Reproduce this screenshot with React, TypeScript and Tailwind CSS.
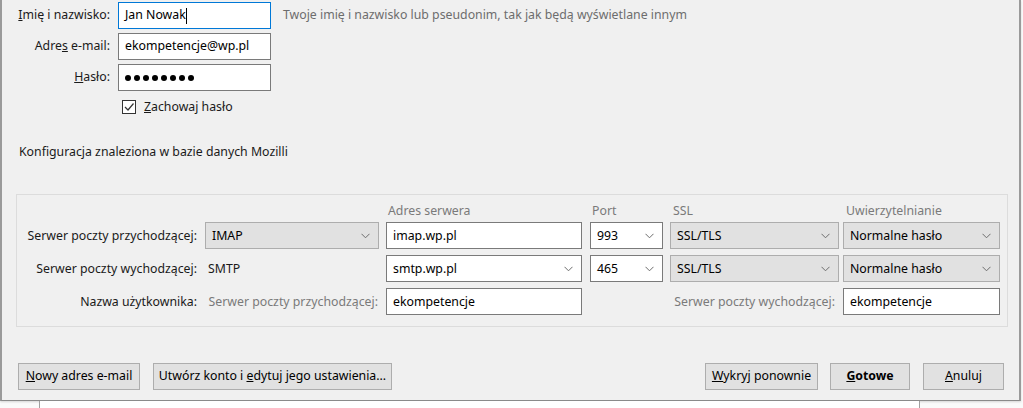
import React from "react";

const font = { fontFamily: '"Segoe UI", "Noto Sans", "DejaVu Sans", sans-serif' };

const Chevron: React.FC<{ className?: string }> = ({ className }) => (
  <svg width="9" height="6" viewBox="0 0 9 6" className={className}>
    <path d="M0.5 0.8 L4.5 4.8 L8.5 0.8" fill="none" stroke="#6d6d6d" strokeWidth="1" />
  </svg>
);

const TextBox: React.FC<{ value: React.ReactNode; w: string; focused?: boolean; chevron?: boolean }> = ({
  value,
  w,
  focused,
  chevron,
}) => (
  <div
    className={`${w} h-[27px] bg-white border ${focused ? "border-[#0078d7]" : "border-[#7a7a7a]"} flex items-center pl-[6px] pr-[8px] text-[12.3px] text-black whitespace-nowrap`}
  >
    <span className="flex-1 flex items-center">{value}</span>
    {chevron && <Chevron />}
  </div>
);

const Select: React.FC<{ value: string; w: string; white?: boolean }> = ({ value, w, white }) => (
  <div
    className={`${w} h-[27px] border ${white ? "bg-white border-[#7a7a7a]" : "bg-[#e1e1e1] border-[#adadad]"} flex items-center pl-[6px] pr-[8px] text-[12.3px] text-black whitespace-nowrap`}
  >
    <span className="flex-1">{value}</span>
    <Chevron />
  </div>
);

const Button: React.FC<{ children: React.ReactNode; w: string; bold?: boolean }> = ({ children, w, bold }) => (
  <div
    className={`${w} h-[27px] bg-[#e1e1e1] border border-[#adadad] flex items-center justify-center text-[12.3px] text-black whitespace-nowrap ${bold ? "font-bold" : ""}`}
  >
    {children}
  </div>
);

const Dots = () => (
  <span className="flex gap-[3px]">
    {[0, 1, 2, 3, 4, 5, 6, 7].map((i) => (
      <span key={i} className="w-[6px] h-[6px] rounded-full bg-black" />
    ))}
  </span>
);

export default function App() {
  return (
    <div className="w-[1023px] h-[408px] bg-[#fafafa] overflow-hidden whitespace-nowrap" style={font}>
      {/* dialog */}
      <div className="w-[1021px] h-[401px] bg-[#f0f0f0] border-l-2 border-r-2 border-b border-l-[#9a9a9a] border-r-[#9a9a9a] border-b-[#8a8a8a] flex flex-col shadow-[0_1px_2px_rgba(0,0,0,0.15)]">
        {/* account fields */}
        <div className="flex flex-col gap-[4px] pt-[2px]">
          <div className="flex items-center">
            <div className="w-[108px] text-right text-[12.3px] text-[#1a1a1a]">
              <span className="underline">I</span>mię i nazwisko:
            </div>
            <div className="ml-[8px]">
              <TextBox
                w="w-[153px]"
                focused
                value={
                  <>
                    Jan Nowak<span className="inline-block w-[1px] h-[16px] bg-black" />
                  </>
                }
              />
            </div>
            <div className="ml-[12px] text-[12.3px] text-[#6d6d6d]">
              Twoje imię i nazwisko lub pseudonim, tak jak będą wyświetlane innym
            </div>
          </div>
          <div className="flex items-center">
            <div className="w-[108px] text-right text-[12.3px] text-[#1a1a1a]">
              Adre<span className="underline">s</span> e-mail:
            </div>
            <div className="ml-[8px]">
              <TextBox w="w-[153px]" value="ekompetencje@wp.pl" />
            </div>
          </div>
          <div className="flex items-center">
            <div className="w-[108px] text-right text-[12.3px] text-[#1a1a1a]">
              <span className="underline">H</span>asło:
            </div>
            <div className="ml-[8px]">
              <TextBox w="w-[153px]" value={<Dots />} />
            </div>
          </div>
          <div className="flex items-center ml-[120px] mt-[3px]">
            <svg width="14" height="14" viewBox="0 0 14 14">
              <rect x="0.5" y="0.5" width="13" height="13" fill="#fff" stroke="#333" />
              <path d="M3 7 L6 10 L11.5 3.5" fill="none" stroke="#333" strokeWidth="1.2" />
            </svg>
            <span className="ml-[8px] text-[12.3px] text-[#1a1a1a]">
              <span className="underline">Z</span>achowaj hasło
            </span>
          </div>
        </div>

        <div className="ml-[17px] mt-[27px] text-[12.3px] text-[#1a1a1a]">Konfiguracja znaleziona w bazie danych Mozilli</div>

        {/* server group */}
        <div className="ml-[14px] mr-[11px] mt-[32px] h-[133px] border border-[#dcdcdc] pt-[7px] pl-[6px] text-[12.3px]">
          <div className="grid grid-cols-[182px_181px_204px_80px_173px_157px]">
            <div />
            <div />
            <div className="text-[#7a7a7a] pl-[2px]">Adres serwera</div>
            <div className="text-[#7a7a7a] pl-[2px]">Port</div>
            <div className="text-[#7a7a7a] pl-[3px]">SSL</div>
            <div className="text-[#7a7a7a] pl-[3px]">Uwierzytelnianie</div>
          </div>
          <div className="grid grid-cols-[182px_181px_204px_80px_173px_157px] gap-y-[6px] items-center mt-[2px]">
            <div className="text-right pr-[8px] text-[#1a1a1a]">Serwer poczty przychodzącej:</div>
            <Select w="w-[174px]" value="IMAP" />
            <TextBox w="w-[196px]" value="imap.wp.pl" />
            <Select w="w-[73px]" white value="993" />
            <Select w="w-[169px]" value="SSL/TLS" />
            <Select w="w-[157px]" value="Normalne hasło" />

            <div className="text-right pr-[8px] text-[#1a1a1a]">Serwer poczty wychodzącej:</div>
            <div className="pl-[3px] text-[#1a1a1a]">SMTP</div>
            <TextBox w="w-[196px]" chevron value="smtp.wp.pl" />
            <Select w="w-[73px]" white value="465" />
            <Select w="w-[169px]" value="SSL/TLS" />
            <Select w="w-[157px]" value="Normalne hasło" />

            <div className="text-right pr-[8px] text-[#1a1a1a]">Nazwa użytkownika:</div>
            <div className="text-right pr-[8px] text-[#7a7a7a]">Serwer poczty przychodzącej:</div>
            <TextBox w="w-[196px]" value="ekompetencje" />
            <div />
            <div className="text-right pr-[8px] text-[#7a7a7a]">Serwer poczty wychodzącej:</div>
            <TextBox w="w-[157px]" value="ekompetencje" />
          </div>
        </div>

        {/* buttons */}
        <div className="flex items-center mt-[36px] ml-[16px] mr-[15px]">
          <Button w="w-[122px]">
            <span>
              <span className="underline">N</span>owy adres e-mail
            </span>
          </Button>
          <div className="ml-[13px]">
            <Button w="w-[239px]">
              <span>
                Utwórz konto i <span className="underline">e</span>dytuj jego ustawienia...
              </span>
            </Button>
          </div>
          <div className="flex-1" />
          <Button w="w-[113px]">
            <span>
              <span className="underline">W</span>ykryj ponownie
            </span>
          </Button>
          <div className="ml-[12px]">
            <Button w="w-[80px]" bold>
              <span>
                <span className="underline">G</span>otowe
              </span>
            </Button>
          </div>
          <div className="ml-[13px]">
            <Button w="w-[81px]">
              <span>
                <span className="underline">A</span>nuluj
              </span>
            </Button>
          </div>
        </div>
      </div>
      {/* window behind */}
      <div className="flex h-[7px]">
        <div className="w-[40px] border-r border-[#a0a0a0]" />
        <div className="w-[880px] border-r border-[#a0a0a0] bg-white" />
      </div>
    </div>
  );
}
